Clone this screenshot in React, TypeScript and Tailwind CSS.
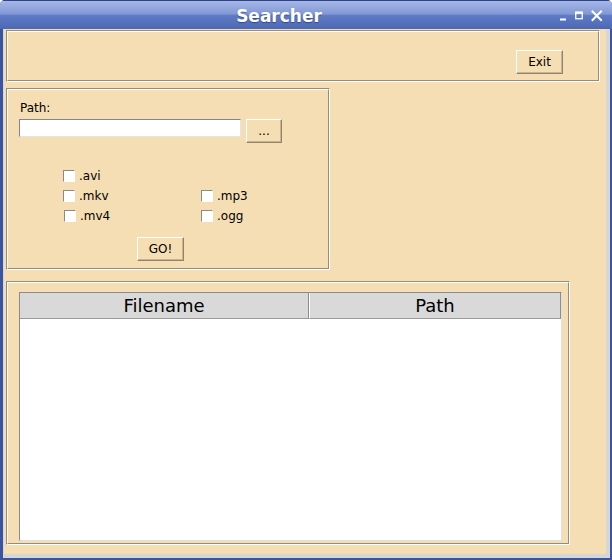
import type { ReactNode } from "react";

const font = "font-['DejaVu_Sans','Liberation_Sans',sans-serif]";

function Groove({ className, children }: { className: string; children?: ReactNode }) {
  return (
    <div
      className={`border border-t-[#978b79] border-l-[#978b79] border-b-white border-r-white ${className}`}
    >
      <div className="h-full w-full border border-t-white border-l-white border-b-[#978b79] border-r-[#978b79]">
        {children}
      </div>
    </div>
  );
}

function TkButton({ label, className }: { label: string; className: string }) {
  return (
    <button
      className={`flex h-[24px] items-center justify-center border border-t-white border-l-white border-b-[#8f8472] border-r-[#8f8472] bg-[#f5deb3] text-[12px] leading-[14px] text-black shadow-[inset_-1px_-1px_0_#c9b48e] ${className}`}
    >
      {label}
    </button>
  );
}

function Check({ label, shift }: { label: string; shift?: boolean }) {
  return (
    <div className={`flex h-[20px] items-center ${shift ? "ml-px" : ""}`}>
      <span className="h-[12px] w-[12px] border border-t-[#8a8a8a] border-l-[#8a8a8a] border-b-white border-r-white bg-white" />
      <span className="ml-[4px] text-[12px] leading-[14px] text-black">{label}</span>
    </div>
  );
}

export default function App() {
  return (
    <div className={`flex h-[560px] w-[612px] flex-col overflow-hidden rounded-t-[5px] bg-[#3a54a2] ${font}`}>
      <div className="flex h-[29px] shrink-0 items-center border-t border-[#2e4488] bg-[linear-gradient(to_bottom,#a6b7e6_0%,#8299d6_46%,#5f7bc5_52%,#4c68b5_100%)]">
        <div className="flex-1 pl-[2px] pt-[3px] text-center text-[17px] font-bold leading-[21px] text-white [text-shadow:0_1px_1px_rgba(20,30,80,0.5)]">
          Searcher
        </div>
        <svg width="56" height="28" viewBox="0 0 56 28" className="shrink-0">
          <rect x="4" y="17.5" width="6" height="2" fill="white" />
          <rect x="19.75" y="11.25" width="6.5" height="6.5" fill="none" stroke="white" strokeWidth="1.3" />
          <rect x="19.2" y="10.7" width="7.6" height="2.2" fill="white" />
          <path d="M36.5 10.5 L45 19 M45 10.5 L36.5 19" stroke="white" strokeWidth="2" strokeLinecap="square" />
        </svg>
      </div>

      <div className="flex flex-1 flex-col border-b-2 border-l-[3px] border-r-2 border-[#3a54a2]">
        <div className="flex flex-1 flex-col border-b-4 border-l border-r-4 border-[#d6d6d6] bg-[#f5deb3] pl-[2px] pt-px">
          <Groove className="h-[52px] w-[594px]">
            <div className="flex h-full items-end justify-end pb-[6px] pr-[35px]">
              <TkButton label="Exit" className="w-[47px]" />
            </div>
          </Groove>

          <Groove className="mt-[6px] h-[182px] w-[324px]">
            <div className="flex flex-col pl-[11px] pt-[11px]">
              <div className="ml-px text-[12px] leading-[14px] text-black">Path:</div>
              <div className="mt-[4px] flex items-start">
                <div className="h-[18px] w-[222px] border border-t-[#858585] border-l-[#858585] border-b-[#e4e4e4] border-r-[#e4e4e4] bg-white" />
                <TkButton label="..." className="ml-[5px] w-[36px]" />
              </div>
              <div className="ml-[44px] mt-[23px] grid grid-cols-[138px_auto]">
                <Check label=".avi" />
                <div />
                <Check label=".mkv" />
                <Check label=".mp3" />
                <Check label=".mv4" shift />
                <Check label=".ogg" />
              </div>
              <TkButton label="GO!" className="ml-[118px] mt-[11px] w-[47px]" />
            </div>
          </Groove>

          <Groove className="mt-[11px] h-[264px] w-[564px]">
            <div className="pl-[11px] pt-[9px]">
              <div className="flex h-[249px] w-[543px] flex-col border border-t-[#8c8c8c] border-l-[#8c8c8c] border-b-[#e0e0e0] border-r-[#e0e0e0] bg-white">
                <div className="flex h-[26px] shrink-0 bg-[#d9d9d9] text-[18px] leading-[21px] text-black">
                  <div className="flex w-[289px] items-center justify-center border-b border-r border-b-[#9a9a9a] border-r-[#8c8c8c]">
                    Filename
                  </div>
                  <div className="flex flex-1 items-center justify-center border-b border-l border-r border-b-[#9a9a9a] border-l-white border-r-[#8c8c8c]">
                    Path
                  </div>
                </div>
                <div className="flex-1" />
              </div>
            </div>
          </Groove>
        </div>
      </div>
    </div>
  );
}
